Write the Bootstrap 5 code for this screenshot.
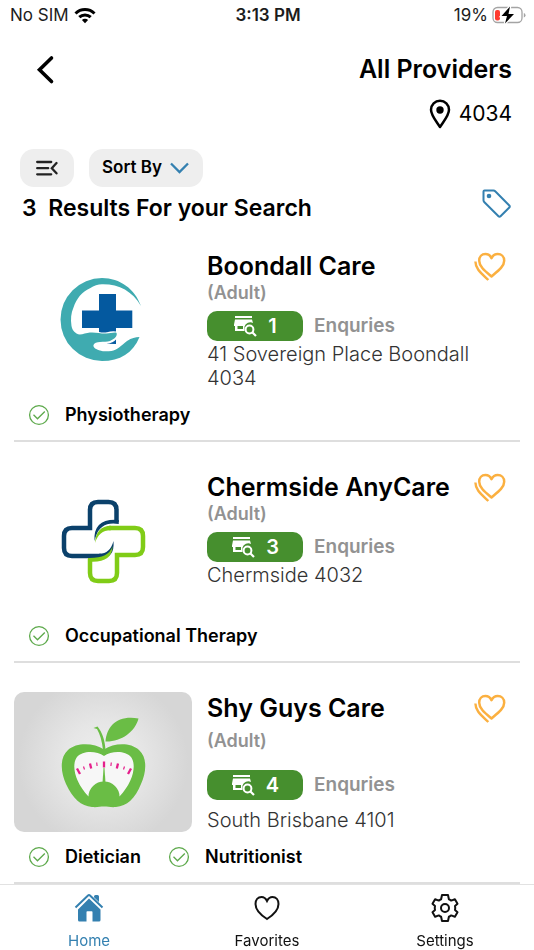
<!DOCTYPE html>
<html lang="en">
<head>
<meta charset="utf-8">
<meta name="viewport" content="width=device-width, initial-scale=1">
<title>All Providers</title>
<link href="https://cdn.jsdelivr.net/npm/bootstrap@5.3.0/dist/css/bootstrap.min.css" rel="stylesheet">
<style>
:root { --brand: #3480b0; --leaf: #468f2e; --muted: #929292; }
body { font-family: Inter, "Liberation Sans", sans-serif; color: #000; background: #fff; padding-bottom: 66px; }
svg { display: block; flex: none; }
.status-bar { height: 30px; padding: 0 8px 0 10px; font-size: 17px; line-height: 30px; color: #1c1c1c; }
.status-bar > * { flex: 1 1 0; }
.app-header { padding: 22px 22px 0 31px; }
.page-title { font-size: 25px; line-height: 34px; font-weight: 600; }
.postcode { font-size: 21px; line-height: 30px; margin-top: 13px; }
.icon-btn { background: none; border: 0; padding: 0; color: inherit; }
.toolbar { padding: 20px 20px 0; gap: 15px; }
.chip { background: #eee; border: 0; border-radius: 14px; height: 38px; font-size: 17px; font-weight: 600; color: #000; padding: 0 14px 0 13px; }
.summary { padding: 0 23px 0 22px; height: 43px; }
.summary h2 { font-size: 23px; line-height: 30px; font-weight: 600; white-space: pre-wrap; margin-bottom: 2px; }
.tag-btn { color: var(--brand); margin-bottom: 10px; }
.provider { margin: 0 14px; padding: 20px 0 13px; border-bottom: 2px solid #dedede; }
.provider + .provider { padding-top: 29px; }
.provider-top { min-height: 140px; gap: 15px; }
.logo-box { width: 178px; height: 140px; border-radius: 10px; overflow: hidden; flex: none; }
.logo-shade { background: radial-gradient(circle, #efefef 0, #e6e6e6 35%, #d6d6d6 75%); }
.provider-name { font-size: 25px; line-height: 32px; font-weight: 600; margin: 0; }
.audience { font-size: 18px; line-height: 22px; font-weight: 600; color: var(--muted); }
.enquiry { margin-top: 7px; gap: 11px; font-size: 19px; line-height: 30px; font-weight: 600; color: var(--muted); }
.count-pill { width: 96px; height: 30px; border-radius: 10px; background: var(--leaf); color: #fff; font-size: 20px; gap: 11px; }
.address { font-size: 20px; line-height: 24px; font-weight: 300; color: #333; margin: 1px 0 0; padding-right: 40px; }
.provider-roomy .audience { margin-top: 6px; }
.provider-roomy .enquiry { margin-top: 18px; }
.provider-roomy .address { margin-top: 8px; }
.like-btn { color: #fbb040; margin: 2px 14px 0 0; }
.services { margin: 13px 0 0; padding-left: 14px; font-size: 18px; line-height: 24px; font-weight: 600; gap: 27px; }
.services li { gap: 15px; }
.tab-bar { background: #fff; border-top: 1px solid #e2e2e2; height: 66px; }
.tab-bar a { flex: 1 1 0; color: #111; font-size: 15px; line-height: 20px; padding-top: 8px; gap: 8px; text-decoration: none; }
.tab-bar a.active { color: var(--brand); }
</style>
<script src="https://cdn.jsdelivr.net/npm/bootstrap@5.3.0/dist/js/bootstrap.bundle.min.js"></script>
</head>
<body>
<svg class="d-none" aria-hidden="true">
  <symbol id="i-heart2" viewBox="0 0 32 30">
    <path d="M17.500 24.500C11 19 5.200 14.500 5.200 8.700 5.200 4.600 7.800 2 11.400 2c2.800 0 4.900 1.500 6.100 4.200C18.800 3.500 20.900 2 23.700 2c3.700 0 6.500 2.600 6.500 6.700 0 5.800-6.200 10.300-12.700 15.800z" fill="none" stroke="currentColor" stroke-width="2.500" stroke-linejoin="round"/>
    <path d="M1.400 9.500C1.500 17 7 21 14.300 28" fill="none" stroke="currentColor" stroke-width="2.400"/>
  </symbol>
  <symbol id="i-shop" viewBox="0 0 24 22">
    <path fill="currentColor" d="M2 1h17v2H2zM2 4.500h17l1 3.500a6 6 0 0 0-8.500 3.500V16H2V11H1V9.500zM4.500 11v3H10v-3z" fill-rule="evenodd"/>
    <circle cx="16.500" cy="14.500" r="3.900" fill="none" stroke="currentColor" stroke-width="2"/>
    <path d="M19.500 17.500l3.500 3.500" stroke="currentColor" stroke-width="2.200"/>
  </symbol>
  <symbol id="i-check" viewBox="0 0 22 22">
    <g fill="none" stroke="#5da94b" stroke-width="1.300"><circle cx="11" cy="11" r="9.400"/><path d="M5.500 10.800l4 4 7.300-7.300"/></g>
  </symbol>
</svg>

<div class="status-bar d-flex align-items-center">
  <div class="d-flex align-items-center gap-1"><span>No SIM</span>
    <svg width="24" height="17" viewBox="-1 0 24 17"><g fill="none" stroke="#000" stroke-width="3"><path d="M1.500 6.500a13.500 13.500 0 0 1 19 0"/><path d="M5.300 10.200a8.200 8.200 0 0 1 11.400 0"/></g><path d="M11 16.300l-3.100-3.200a4.400 4.400 0 0 1 6.200 0z"/></svg>
  </div>
  <div class="text-center fw-semibold">3:13 PM</div>
  <div class="d-flex align-items-center justify-content-end gap-1"><span>19%</span>
    <svg width="34" height="18" viewBox="0 0 34 18"><rect x="1" y="1.500" width="29" height="15" rx="4.500" fill="#fff" stroke="#a4a4a4" stroke-width="1.300"/><rect x="3" y="4" width="5" height="10.500" rx="2" fill="#ff3b30"/><path d="M31.800 7v4.500q1.700-.6 1.700-2.250T31.800 7z" fill="#a4a4a4"/><path d="M18 .5L9.500 10H15l-2 7.500L22 8h-5.500z" stroke="#fff" stroke-width="2.500"/><path d="M18 .5L9.500 10H15l-2 7.500L22 8h-5.500z"/></svg>
  </div>
</div>

<header class="app-header d-flex justify-content-between align-items-start">
  <button class="icon-btn" type="button" aria-label="Back">
    <svg width="28" height="34" viewBox="0 0 28 34"><path d="M20.500 6L8.500 17.800l12 11.700" fill="none" stroke="#000" stroke-width="3.600" stroke-linecap="round"/></svg>
  </button>
  <div class="d-flex flex-column align-items-end">
    <h1 class="page-title mb-0">All Providers</h1>
    <div class="postcode d-flex align-items-center gap-2">
      <svg width="22" height="30" viewBox="0 0 22 30"><path d="M11 28C6 20.500 2 16 2 10.700a9 9 0 0 1 18 0C20 16 16 20.500 11 28z" fill="none" stroke="#000" stroke-width="2.500" stroke-linejoin="round"/><circle cx="11" cy="11" r="3.700"/></svg>
      <span>4034</span>
    </div>
  </div>
</header>

<main>
  <div class="toolbar d-flex">
    <button class="chip px-3" type="button" aria-label="Filters">
      <svg width="22" height="16" viewBox="0 0 22 16"><g fill="none" stroke="#222" stroke-width="2.300" stroke-linecap="round"><path d="M1.200 2h14M1.200 8.200h11M1.200 14.300h14M20.500 3l-4.700 5.200 4.700 5.100"/></g></svg>
    </button>
    <button class="chip d-flex align-items-center gap-2" type="button">Sort By
      <svg width="19" height="12" viewBox="0 0 19 12"><path d="M1 1.500l8.500 8.500L18 1.500" fill="none" stroke="#3480b0" stroke-width="2.300"/></svg>
    </button>
  </div>
  <div class="summary d-flex justify-content-between align-items-center">
    <h2>3  Results For your Search</h2>
    <button class="icon-btn tag-btn" type="button" aria-label="Tags">
      <svg width="29" height="29" viewBox="0 0 29 29"><path d="M1.500 2.500q0-1 1-1h9q1 0 1.700.7L27.300 16.500q1 1 0 2l-8.800 8.800q-1 1-2 0L2.200 13q-.7-.7-.7-1.700z" fill="none" stroke="currentColor" stroke-width="2"/><circle cx="7" cy="7" r="2.300" fill="currentColor"/></svg>
    </button>
  </div>

  <article class="provider">
    <div class="provider-top d-flex">
      <div class="logo-box d-flex align-items-center justify-content-center">
        <svg width="88" height="88" viewBox="0 -1 88 88">
          <path d="M82 29C76 12 61 1 43 1A41.500 41.500 0 0 0 43 84C61 84 74 76 80.500 60 76 60 73 61 68 64 62 69 58 73 52.500 74 48 74.500 44 74.500 41 73.500 36 72 34 70 34.500 68 35 66 38 65 41 65 45 64.500 48 65 51 64 55 62 57 60.500 57.700 58 58 56 57.500 55.500 56 55.500 53 55.500 50.500 56.500 47.500 56.500 42 56.800 37 55 31 55.500 26 56 21 59 17.500 56.500 14 54 13 52 12.500 49 11.500 42 12 36 14.500 30.500 17.500 21.500 23 15 31 11.300 35 8.500 39 7.500 43 7.300 60 7 73 14 82 29z" fill="#3fabb0"/>
          <path d="M40 17h17v16.500h16.300V51H57v3.500q-4-.8-9 .8-4 .6-8-.300V51H23V33.500h17zM57 62.500V67l-9.500-.3q7-.8 9.500-4.200z" fill="#04599f"/>
        </svg>
      </div>
      <div class="flex-grow-1">
        <div class="d-flex justify-content-between align-items-start">
          <h3 class="provider-name">Boondall Care</h3>
          <button class="icon-btn like-btn" type="button" aria-label="Save Boondall Care"><svg width="32" height="30"><use href="#i-heart2"/></svg></button>
        </div>
        <div class="audience">(Adult)</div>
        <div class="enquiry d-flex align-items-center"><span class="count-pill d-flex align-items-center justify-content-center"><svg width="24" height="22"><use href="#i-shop"/></svg>1</span>Enquries</div>
        <p class="address">41 Sovereign Place Boondall 4034</p>
      </div>
    </div>
    <ul class="services list-unstyled d-flex"><li class="d-flex align-items-center"><svg width="22" height="22"><use href="#i-check"/></svg>Physiotherapy</li></ul>
  </article>

  <article class="provider">
    <div class="provider-top d-flex">
      <div class="logo-box d-flex align-items-center justify-content-center">
        <svg width="88" height="88" viewBox="0 0 88 88">
          <g fill="none" stroke-width="4.500">
            <path d="M57.500 25V13q0-8-8-8H39q-8 0-8 8v18H13q-8 0-8 8v12q0 8 8 8h29" stroke="#0b416b"/>
            <path d="M31 62v14q0 8 8 8h11q8 0 8-8V58h18q8 0 8-8V39q0-8-8-8H50" stroke="#80cc17"/>
          </g>
          <path d="M59.750 23v4Q42 24 37 39q-1 3-1.500 5Q34 21 59.750 23zM40 56.800Q51 57 54.500 44 56 62 40 61.300z" fill="#0b416b"/>
          <path d="M52 28.700Q37 29 36 46q4-13 16-12.700zM29 61v3.500q24 2 24.500-15-4 12-24.500 11.500z" fill="#80cc17"/>
        </svg>
      </div>
      <div class="flex-grow-1">
        <div class="d-flex justify-content-between align-items-start">
          <h3 class="provider-name">Chermside AnyCare</h3>
          <button class="icon-btn like-btn" type="button" aria-label="Save Chermside AnyCare"><svg width="32" height="30"><use href="#i-heart2"/></svg></button>
        </div>
        <div class="audience">(Adult)</div>
        <div class="enquiry d-flex align-items-center"><span class="count-pill d-flex align-items-center justify-content-center"><svg width="24" height="22"><use href="#i-shop"/></svg>3</span>Enquries</div>
        <p class="address">Chermside 4032</p>
      </div>
    </div>
    <ul class="services list-unstyled d-flex"><li class="d-flex align-items-center"><svg width="22" height="22"><use href="#i-check"/></svg>Occupational Therapy</li></ul>
  </article>

  <article class="provider provider-roomy">
    <div class="provider-top d-flex">
      <div class="logo-box logo-shade">
        <svg width="178" height="140" viewBox="0 0 178 140">
          <g fill="#6abd45">
            <path d="M90 57.500C80 51 63 50 54 58c-9 8-7 23-2 34 7 15 15 22 26 23 5 .5 8-.5 12-.5s7 1 12 .5c11-1 19-8 25-23 5-11 7-26-2-34-9-8-25-7-35-.5z"/>
            <path d="M79.500 36l4-1.500C88 40 91 48 91.500 58H89C88 49 86 42 83 37zM91.500 49.500C93 34 103 23 124.500 26.500 121 40 107 50 91.500 49.500z"/>
          </g>
          <path d="M90 64C97 59 111 58 117 65 123 73 119 90 105.500 104.500A15.500 15 0 0 0 74.500 104.500C61 90 57 73 63 65 69 58 83 59 90 64z" fill="#f7f7f7"/>
          <path d="M89.500 76h1l1 15h-3z" fill="#6abd45"/>
          <g stroke="#e5208c"><path d="M90 69.500v6M76 71.500l1.200 5M104 71.500l-1.200 5M63 76.500l3 5.500M117 76.500l-3 5.500" stroke-width="2.300"/><path d="M82.700 70.500l.4 3.500M97.300 70.500l-.4 3.500M69.500 74.500l1 3M110.500 74.500l-1 3" stroke-width="1.200"/></g>
        </svg>
      </div>
      <div class="flex-grow-1">
        <div class="d-flex justify-content-between align-items-start">
          <h3 class="provider-name">Shy Guys Care</h3>
          <button class="icon-btn like-btn" type="button" aria-label="Save Shy Guys Care"><svg width="32" height="30"><use href="#i-heart2"/></svg></button>
        </div>
        <div class="audience">(Adult)</div>
        <div class="enquiry d-flex align-items-center"><span class="count-pill d-flex align-items-center justify-content-center"><svg width="24" height="22"><use href="#i-shop"/></svg>4</span>Enquries</div>
        <p class="address">South Brisbane 4101</p>
      </div>
    </div>
    <ul class="services list-unstyled d-flex"><li class="d-flex align-items-center"><svg width="22" height="22"><use href="#i-check"/></svg>Dietician</li><li class="d-flex align-items-center"><svg width="22" height="22"><use href="#i-check"/></svg>Nutritionist</li></ul>
  </article>
</main>

<nav class="tab-bar fixed-bottom d-flex" aria-label="Main">
  <a class="active d-flex flex-column align-items-center" href="#home" aria-current="page">
    <svg width="30" height="30" viewBox="0 0 30 30"><path d="M20 3.500q0-1.500 1.500-1.500h2q1.500 0 1.500 1.500v7l-5-5zM15 5.500l11.500 11V27q0 1.500-1.500 1.500h-6.500V19q0-.8-.8-.8h-4.400q-.8 0-.8.800v9.500H5.500Q4 28.500 4 27V16.500z" fill="currentColor"/><path d="M1.500 15L14 2.700q1-.9 2 0L28.500 15" fill="none" stroke="#fff" stroke-width="3.600"/><path d="M1.500 14.500L14 2.500q1-.9 2 0l12.500 12" fill="none" stroke="currentColor" stroke-width="2"/></svg>
    Home</a>
  <a class="d-flex flex-column align-items-center" href="#favorites">
    <svg width="30" height="30" viewBox="0 0 30 30"><path d="M15 26C9.500 22.500 3.500 16.500 3.500 11 3.500 7 6 4 9.500 4c2.500 0 4.300 1.500 5.500 4 1.200-2.500 3-4 5.500-4 3.500 0 6 3 6 7 0 5.500-6 11.500-11.500 15z" fill="none" stroke="currentColor" stroke-width="2"/></svg>
    Favorites</a>
  <a class="d-flex flex-column align-items-center" href="#settings">
    <svg width="30" height="30" viewBox="0 0 30 30"><g fill="none" stroke="currentColor" stroke-width="2" stroke-linejoin="round"><path d="M12 2h6l.9 4.300q1.300.5 2.300 1.300l3.700-1.300 2.600 4.500-2.500 2.200q.5 2 0 4l2.500 2.200-2.600 4.500-3.700-1.300q-1 .8-2.300 1.300L18 28h-6l-.9-4.300q-1.300-.5-2.300-1.300l-3.700 1.300-2.600-4.500L5 17q-.5-2 0-4l-2.500-2.200 2.600-4.500 3.700 1.300q1-.8 2.300-1.300z"/><circle cx="15" cy="15" r="4"/></g></svg>
    Settings</a>
</nav>
</body>
</html>
